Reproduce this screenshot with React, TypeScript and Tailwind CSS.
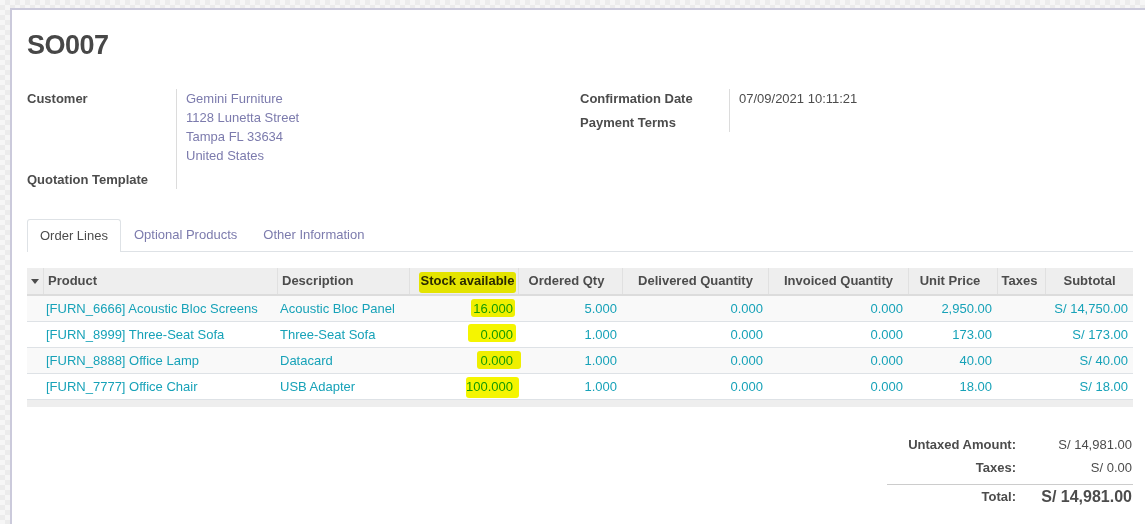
import React from 'react';

const LINES = [
  {
    product: '[FURN_6666] Acoustic Bloc Screens',
    desc: 'Acoustic Bloc Panel',
    stock: '16.000',
    ordered: '5.000',
    delivered: '0.000',
    invoiced: '0.000',
    price: '2,950.00',
    subtotal: 'S/ 14,750.00',
    mark: 'top-[3px] h-[18px] left-[62px] w-[44px]',
    striped: true,
  },
  {
    product: '[FURN_8999] Three-Seat Sofa',
    desc: 'Three-Seat Sofa',
    stock: '0.000',
    ordered: '1.000',
    delivered: '0.000',
    invoiced: '0.000',
    price: '173.00',
    subtotal: 'S/ 173.00',
    mark: 'top-[2px] h-[18px] left-[59px] w-[48px]',
    striped: false,
  },
  {
    product: '[FURN_8888] Office Lamp',
    desc: 'Datacard',
    stock: '0.000',
    ordered: '1.000',
    delivered: '0.000',
    invoiced: '0.000',
    price: '40.00',
    subtotal: 'S/ 40.00',
    mark: 'top-[3px] h-[18px] left-[68px] w-[44px]',
    striped: true,
  },
  {
    product: '[FURN_7777] Office Chair',
    desc: 'USB Adapter',
    stock: '100.000',
    ordered: '1.000',
    delivered: '0.000',
    invoiced: '0.000',
    price: '18.00',
    subtotal: 'S/ 18.00',
    mark: 'top-[3px] h-[21px] left-[57px] w-[53px]',
    striped: false,
  },
];

const COLS = 'grid grid-cols-[16px_234px_132px_109px_104px_146px_140px_89px_48px_88px]';

export default function App() {
  return (
    <div className="w-[1145px] h-[524px] overflow-hidden bg-[#f1f1f1] bg-[image:repeating-conic-gradient(#ececec_0%_25%,#f6f6f6_0%_50%)] bg-[length:10px_10px] pt-[8px] pl-[10px] font-['Liberation_Sans',Arial,sans-serif] text-[13px] text-[#4c4c4c]">
      <div className="w-[1160px] h-[600px] bg-white border-t-2 border-l-2 border-[#cbcadb] pt-[19px] pl-[15px]">
        <div className="w-[1106px]">
          {/* Title */}
          <h1 className="text-[27px] leading-[32px] font-bold tracking-[-0.5px] text-[#474747]">SO007</h1>

          {/* Header groups */}
          <div className="mt-[28px] grid grid-cols-2 leading-[19px]">
            <div className="grid grid-cols-[150px_1fr]">
              <div className="font-bold border-r border-[#dcdcdc]">Customer</div>
              <div className="pl-[9px] text-[#7c7bad]">
                <div>Gemini Furniture</div>
                <div>1128 Lunetta Street</div>
                <div>Tampa FL 33634</div>
                <div>United States</div>
              </div>
              <div className="font-bold border-r border-[#dcdcdc] pt-[5px]">Quotation Template</div>
              <div className="pt-[5px]"></div>
            </div>
            <div className="grid grid-cols-[150px_1fr] content-start">
              <div className="font-bold border-r border-[#dcdcdc]">Confirmation Date</div>
              <div className="pl-[9px]">07/09/2021 10:11:21</div>
              <div className="font-bold border-r border-[#dcdcdc] pt-[5px]">Payment Terms</div>
              <div className="pt-[5px]"></div>
            </div>
          </div>

          {/* Tabs */}
          <div className="mt-[30px] flex border-b border-[#dee2e6]">
            <div className="h-[33px] -mb-px px-[12px] leading-[31px] border border-b-0 border-[#dee2e6] rounded-t-[3px] bg-white text-[#4c4c4c]">
              Order Lines
            </div>
            <div className="h-[32px] px-[13px] leading-[32px] text-[#7c7bad]">Optional Products</div>
            <div className="h-[32px] px-[13px] leading-[32px] text-[#7c7bad]">Other Information</div>
          </div>

          {/* Order lines table */}
          <div className="mt-[16px]">
            <div className={`${COLS} h-[28px] bg-[#eeeeee] border-b-2 border-[#dcdcdc] font-bold leading-[26px]`}>
              <div className="flex items-center justify-center">
                <span className="w-0 h-0 border-l-[4px] border-r-[4px] border-t-[5px] border-l-transparent border-r-transparent border-t-[#4c4c4c]" />
              </div>
              <div className="pl-[4px] border-l border-[#e0e0e0]">Product</div>
              <div className="pl-[4px] border-l border-[#e0e0e0]">Description</div>
              <div className="relative pl-[7px] text-center border-l border-[#e0e0e0]">
                <span className="text-[#2b2b2b]">Stock available</span>
                <span className="absolute top-[4px] h-[21px] left-[9px] w-[97px] bg-[#f5f500] mix-blend-multiply rounded-[3px]" />
              </div>
              <div className="pr-[8px] text-center border-l border-[#e0e0e0]">Ordered Qty</div>
              <div className="text-center border-l border-[#e0e0e0]">Delivered Quantity</div>
              <div className="text-center border-l border-[#e0e0e0]">Invoiced Quantity</div>
              <div className="pr-[6px] text-center border-l border-[#e0e0e0]">Unit Price</div>
              <div className="pr-[4px] text-center border-l border-[#e0e0e0]">Taxes</div>
              <div className="text-center border-l border-[#e0e0e0]">Subtotal</div>
            </div>

            {LINES.map((line, idx) => (
              <div
                key={idx}
                className={`${COLS} h-[26px] border-b border-[#dee2e6] leading-[25px] text-[#17a2b8] ${line.striped ? 'bg-[#f9f9f9]' : 'bg-white'}`}
              >
                <div></div>
                <div className="pl-[3px] whitespace-nowrap">{line.product}</div>
                <div className="pl-[3px] whitespace-nowrap">{line.desc}</div>
                <div className="relative pr-[5px] text-right">
                  <span>{line.stock}</span>
                  <span className={`absolute ${line.mark} bg-[#f5f500] mix-blend-multiply rounded-[3px]`} />
                </div>
                <div className="pr-[5px] text-right">{line.ordered}</div>
                <div className="pr-[5px] text-right">{line.delivered}</div>
                <div className="pr-[5px] text-right">{line.invoiced}</div>
                <div className="pr-[5px] text-right">{line.price}</div>
                <div></div>
                <div className="pr-[5px] text-right whitespace-nowrap">{line.subtotal}</div>
              </div>
            ))}

            <div className="h-[7px] bg-[#eeeeee]"></div>
          </div>

          {/* Totals */}
          <div className="mt-[26px] ml-auto w-[246px]">
            <div className="grid grid-cols-[133px_113px] leading-[23px]">
              <div className="pr-[4px] text-right font-bold">Untaxed Amount:</div>
              <div className="pr-[1px] text-right">S/ 14,981.00</div>
            </div>
            <div className="grid grid-cols-[133px_113px] leading-[23px] pb-[5px] border-b border-[#cccccc]">
              <div className="pr-[4px] text-right font-bold">Taxes:</div>
              <div className="pr-[1px] text-right">S/ 0.00</div>
            </div>
            <div className="grid grid-cols-[133px_113px] items-center h-[24px]">
              <div className="pr-[4px] text-right font-bold">Total:</div>
              <div className="pr-[1px] text-right font-bold text-[16px]">S/ 14,981.00</div>
            </div>
          </div>
        </div>
      </div>
    </div>
  );
}
